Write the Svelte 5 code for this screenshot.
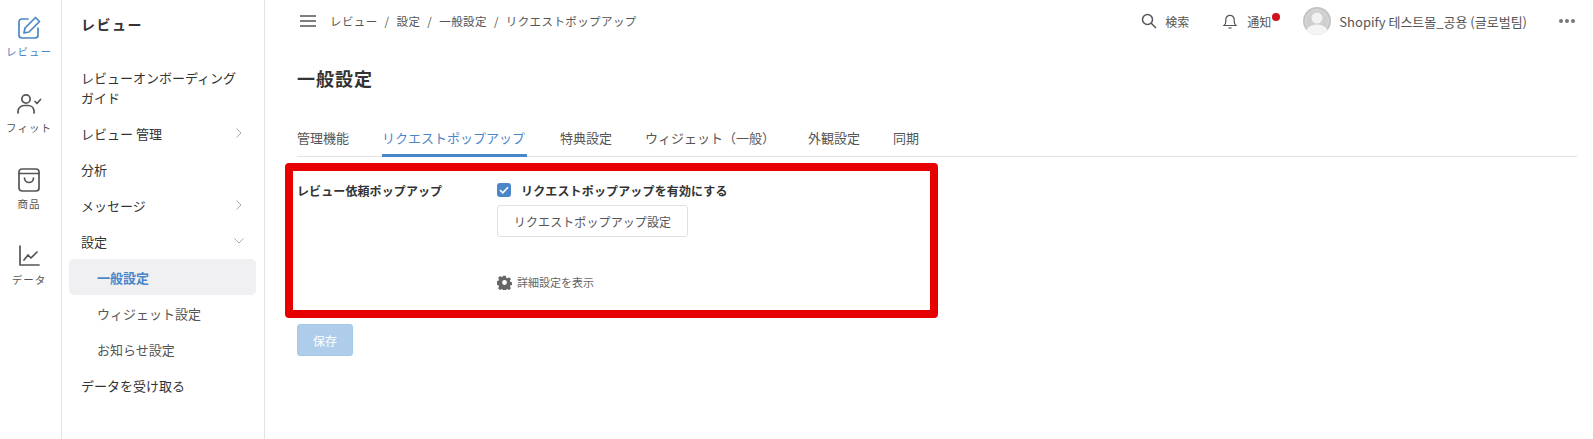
<script>
  const rail = [
    { key: 'review', label: 'レビュー', active: true },
    { key: 'fit', label: 'フィット' },
    { key: 'goods', label: '商品' },
    { key: 'data', label: 'データ' },
  ]
  const menu = [
    { label: 'レビューオンボーディングガイド', tall: true },
    { label: 'レビュー 管理', arrow: 'right' },
    { label: '分析' },
    { label: 'メッセージ', arrow: 'right' },
    { label: '設定', arrow: 'down' },
    { label: '一般設定', sub: true, active: true },
    { label: 'ウィジェット設定', sub: true },
    { label: 'お知らせ設定', sub: true },
    { label: 'データを受け取る' },
  ]
  const crumbs = ['レビュー', '設定', '一般設定', 'リクエストポップアップ']
  const tabs = ['管理機能', 'リクエストポップアップ', '特典設定', 'ウィジェット（一般）', '外観設定', '同期']
</script>

<div class="page">
  <nav class="rail">
    {#each rail as r}
      <div class="rail-item" class:active={r.active}>
        <svg width="26" height="26" viewBox="0 0 26 26" fill="none" stroke="currentColor" stroke-width="1.7" stroke-linecap="round" stroke-linejoin="round">
          {#if r.key === 'review'}
            <path d="M12 4H6a3 3 0 0 0-3 3v13a3 3 0 0 0 3 3h13a3 3 0 0 0 3-3v-7" />
            <path d="M19.500 2.500l4 4L13 17l-5 1 1-5z" />
          {:else if r.key === 'fit'}
            <circle cx="10" cy="8" r="4.200" />
            <path d="M2 22v-1.500a6 6 0 0 1 6-6h4a6 6 0 0 1 6 5V22" />
            <path d="M19 10.500l2 2 3.500-4" />
          {:else if r.key === 'goods'}
            <path d="M6 2h14a3 3 0 0 1 3 3v16a3 3 0 0 1-3 3H6a3 3 0 0 1-3-3V5a3 3 0 0 1 3-3z" />
            <path d="M3 6.500h20" />
            <path d="M8.500 11a4.500 4.500 0 0 0 9 0" />
          {:else}
            <path d="M4 3v19h19" />
            <path d="M8 17l4-5 3 3 6-6" />
          {/if}
        </svg>
        <span>{r.label}</span>
      </div>
    {/each}
  </nav>

  <aside class="side">
    <h2>レビュー</h2>
    <ul>
      {#each menu as m}
        <li class:tall={m.tall} class:sub={m.sub} class:active={m.active}>
          <span class="txt">{m.label}</span>
          {#if m.arrow === 'right'}
            <svg class="arrow" width="8" height="12" viewBox="0 0 8 12" fill="none" stroke="#aaa" stroke-width="1"><path d="M1.500 1.500L6 6l-4.500 4.500" /></svg>
          {:else if m.arrow === 'down'}
            <svg class="arrow down" width="12" height="8" viewBox="0 0 12 8" fill="none" stroke="#aaa" stroke-width="1"><path d="M1.500 1.500L6 6l4.500-4.500" /></svg>
          {/if}
        </li>
      {/each}
    </ul>
  </aside>

  <main>
    <header class="top">
      <svg class="burger" width="16" height="12" viewBox="0 0 16 12" stroke="#555" stroke-width="1.300"><path d="M0 1h16M0 6h16M0 11h16" /></svg>
      <div class="crumbs">
        {#each crumbs as c, i}
          {#if i > 0}<span class="sep">/</span>{/if}
          <span>{c}</span>
        {/each}
      </div>
      <div class="tools">
        <div class="tool search">
          <svg width="16" height="16" viewBox="0 0 16 16" fill="none" stroke="#555" stroke-width="1.500"><circle cx="6.500" cy="6.500" r="5" /><path d="M10.200 10.200L15 15" /></svg>
          <span>検索</span>
        </div>
        <div class="tool bell">
          <svg width="14" height="16" viewBox="0 0 14 16" fill="none" stroke="#555" stroke-width="1.200"><path d="M1 12.500h12c-1.300-1-1.800-2-1.800-4V6.500a4.200 4.200 0 0 0-8.400 0v2c0 2-.5 3-1.800 4z" /><path d="M5.500 15h3" /></svg>
          <span>通知</span>
          <i class="dot"></i>
        </div>
        <div class="tool user">
          <svg class="avatar" width="28" height="28" viewBox="0 0 28 28">
            <defs><clipPath id="av"><circle cx="14" cy="14" r="14" /></clipPath></defs>
            <circle cx="14" cy="14" r="14" fill="#c4c4c4" />
            <g clip-path="url(#av)">
              <circle cx="14" cy="14" r="11.500" fill="#cfcfcf" stroke="#dcdcdc" />
              <circle cx="14" cy="11" r="5.500" fill="#f2f2f2" />
              <ellipse cx="14" cy="25" rx="11" ry="7.500" fill="#f4f4f4" />
            </g>
          </svg>
          <span>Shopify 테스트몰_공용 (글로벌팀)</span>
        </div>
        <div class="more"><i></i><i></i><i></i></div>
      </div>
    </header>

    <h1>一般設定</h1>

    <div class="tabs">
      {#each tabs as t, i}
        <div class="tab" class:active={i === 1}>{t}</div>
      {/each}
    </div>

    <section class="box">
      <div class="label">レビュー依頼ポップアップ</div>
      <div class="fields">
        <div class="check">
          <span class="cb">
            <svg width="10" height="8" viewBox="0 0 10 8" fill="none" stroke="#fff" stroke-width="1.600"><path d="M1 4l2.800 2.800L9 1.200" /></svg>
          </span>
          <b>リクエストポップアップを有効にする</b>
        </div>
        <button class="btn">リクエストポップアップ設定</button>
        <div class="adv">
          <svg width="15" height="15" viewBox="0 0 16 16">
            <path fill="#666" fill-rule="evenodd" d="M6.600.8h2.800l.4 2 1.300.6 1.800-1.100 2 2-1.100 1.800.6 1.300 2 .4v2.800l-2 .4-.6 1.300 1.100 1.800-2 2-1.800-1.100-1.300.6-.4 2H6.600l-.4-2-1.300-.6-1.800 1.100-2-2 1.100-1.800-.6-1.300-2-.4V6.600l2-.4.600-1.300-1.100-1.800 2-2 1.800 1.100 1.300-.6zM8 5.400a2.600 2.600 0 1 0 0 5.200 2.600 2.600 0 0 0 0-5.200z" />
          </svg>
          <span>詳細設定を表示</span>
        </div>
      </div>
    </section>

    <button class="save">保存</button>
  </main>
</div>

<style>
  :global(body) { margin: 0; background: #fff; }
  .page {
    display: flex;
    height: 439px;
    overflow: hidden;
    font-family: "Noto Sans CJK JP", "Noto Sans CJK KR", "Noto Sans", sans-serif;
    color: #333;
    background: #fff;
  }

  .rail { width: 58px; flex: none; border-right: 1px solid #e3e3e3; padding: 15px 3px 0 0; }
  .rail-item { display: flex; flex-direction: column; align-items: center; height: 76px; color: #555; }
  .rail-item span { font-size: 10.500px; line-height: 14px; margin-top: 4px; letter-spacing: 1px; white-space: nowrap; }
  .rail-item.active { color: #4a86c8; }

  .side { width: 202px; flex: none; border-right: 1px solid #e3e3e3; }
  .side h2 { margin: 0; padding: 14px 0 0 19px; height: 46px; font-size: 14px; line-height: 20px; font-weight: 700; letter-spacing: 1.500px; }
  .side ul { list-style: none; margin: 0; padding: 0 8px 0 7px; }
  .side li { display: flex; align-items: center; justify-content: space-between; height: 36px; padding: 0 13px 0 12px; font-size: 13px; color: #333; }
  .side li.tall { height: 56px; line-height: 20px; margin-bottom: -1px; }
  .side li.tall .txt { width: 160px; }
  .side li.sub { padding-left: 28px; color: #555; }
  .side li.active { background: #f0f0f2; border-radius: 5px; color: #4a86c8; font-weight: 700; }
  .arrow.down { margin-right: -2px; }

  main { flex: 1; min-width: 0; padding: 0 16px 0 32px; }

  .top { display: flex; align-items: center; height: 42px; }
  .burger { margin-left: 3px; margin-right: 14px; flex: none; }
  .crumbs { display: flex; gap: 7px; font-size: 11.500px; color: #555; letter-spacing: .4px; }
  .tools { margin-left: auto; display: flex; align-items: center; font-size: 12px; color: #555; padding-right: 2px; }
  .tool { display: flex; align-items: center; position: relative; }
  .search { gap: 8px; margin-right: 34px; }
  .bell { gap: 10px; margin-right: 32px; }
  .dot { position: absolute; right: -9px; top: 0; width: 8px; height: 8px; border-radius: 50%; background: #d0121b; }
  .user { gap: 8px; font-size: 13px; margin-right: 32px; }
  .more { display: flex; gap: 2px; }
  .more i { width: 4px; height: 4px; border-radius: 50%; background: #777; }

  h1 { margin: 23px 0 0; font-size: 18px; line-height: 26px; font-weight: 700; letter-spacing: 1px; color: #333; }

  .tabs { display: flex; gap: 33px; margin-top: 38px; border-bottom: 1px solid #e3e3e3; }
  .tab { height: 27px; font-size: 13px; line-height: 18px; color: #555; box-sizing: border-box; }
  .tab.active { color: #4a86c8; border-bottom: 3px solid #4a86c8; margin-bottom: -1px; height: 28px; padding-right: 2px; }

  .box {
    display: flex;
    width: 653px;
    height: 155px;
    box-sizing: border-box;
    margin: 6px 0 0 -12px;
    border: 8px solid #e60000;
    border-radius: 4px;
    padding: 11px 0 0 4px;
  }
  .label { width: 200px; flex: none; font-size: 12px; font-weight: 700; line-height: 18px; color: #333; letter-spacing: .1px; }
  .fields { display: flex; flex-direction: column; align-items: flex-start; margin-top: -1px; }
  .check { display: flex; align-items: center; gap: 10px; height: 18px; font-size: 12px; }
  .check b { letter-spacing: .15px; }
  .cb { width: 14px; height: 14px; border-radius: 3px; background: #4a86c8; display: flex; align-items: center; justify-content: center; }
  .btn { margin-top: 6px; height: 32px; width: 191px; padding: 0; background: #fff; border: 1px solid #e0e0e0; border-radius: 3px; font: inherit; font-size: 12px; color: #555; letter-spacing: .1px; }
  .adv { display: flex; align-items: center; gap: 5px; margin-top: 37px; font-size: 11px; color: #666; }

  .save { display: block; margin-top: 6px; width: 56px; height: 32px; padding: 0; border: 1px solid #a6c8e8; border-radius: 3px; background: #aecdeb; color: #fff; font: inherit; font-size: 12px; }
</style>
